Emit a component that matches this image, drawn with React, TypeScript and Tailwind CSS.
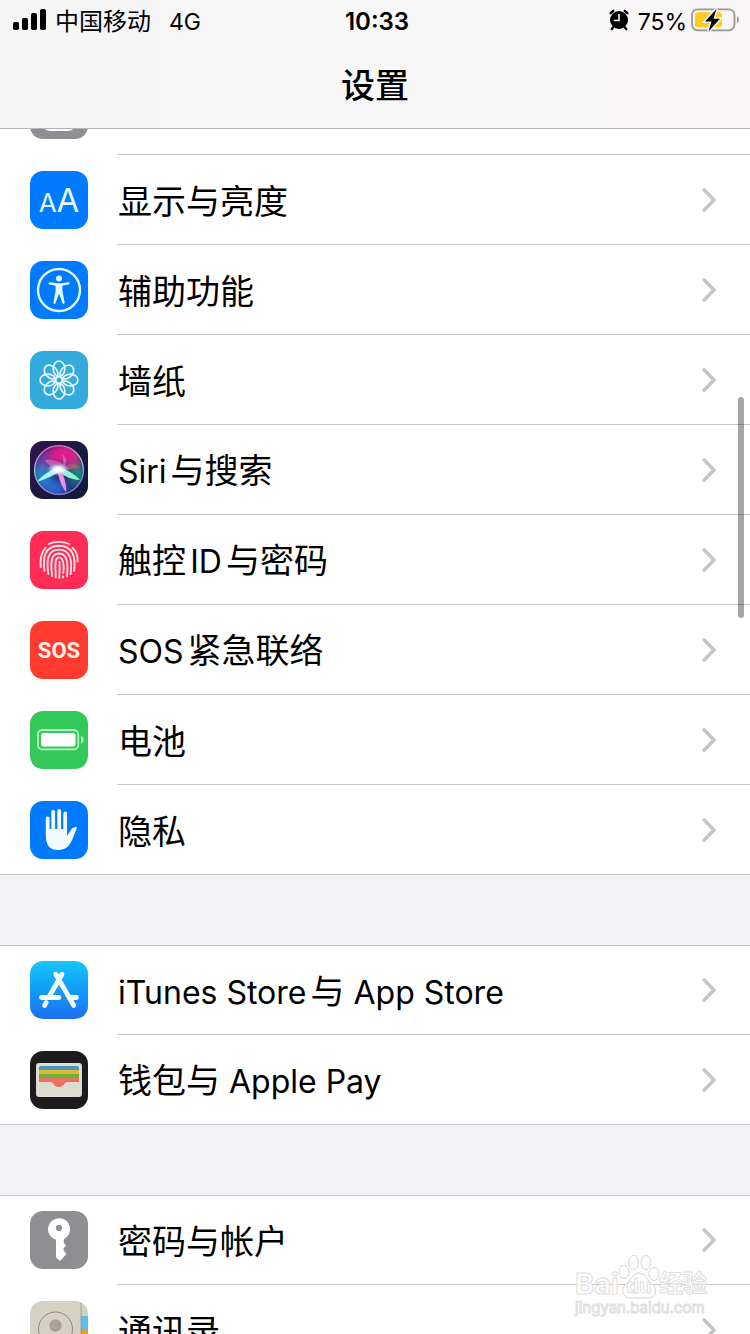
import React from "react";

interface TileProps {
  children: React.ReactNode;
  className?: string;
}

function Tile({ children, className = "" }: TileProps) {
  return (
    <svg
      viewBox="0 0 58 58"
      aria-hidden="true"
      className={`size-[58px] shrink-0 rounded-[13px] ${className}`}
    >
      {children}
    </svg>
  );
}

function ControlCenterIcon() {
  return (
    <Tile className="bg-[#8e8e93]">
      <rect x="11" y="10" width="36" height="17" rx="8.5" fill="none" stroke="#fff" strokeWidth="2.5" />
      <rect x="11" y="31" width="36" height="19" rx="9.5" fill="#fff" />
    </Tile>
  );
}

function DisplayIcon() {
  return (
    <span
      aria-hidden="true"
      className="flex size-[58px] shrink-0 items-baseline justify-center rounded-[13px] bg-[#007aff] pt-[9px] leading-10 text-[#e4f8ff]"
    >
      <span className="text-[26px]">A</span>
      <span className="text-[33px]">A</span>
    </span>
  );
}

function AccessibilityIcon() {
  return (
    <Tile className="bg-[#007aff]">
      <circle cx="29" cy="29" r="21" fill="none" stroke="#e4f8ff" strokeWidth="2.4" />
      <circle cx="29" cy="17.6" r="3" fill="#e4f8ff" />
      <path
        d="M19.5 21.3 27 22.3H31L38.5 21.3C40 21.3 40 23.4 38.7 23.6L32.4 24.8V30L34.6 41.3C34.8 43 33 43.4 32.4 42L29.4 33.5H28.6L25.6 42C25 43.4 23.2 43 23.4 41.3L25.6 30V24.8L19.3 23.6C18 23.4 18 21.3 19.5 21.3Z"
        fill="#e4f8ff"
      />
    </Tile>
  );
}

function WallpaperIcon() {
  const petals = [0, 45, 90, 135, 180, 225, 270, 315];
  return (
    <Tile className="bg-[#34aadc]">
      <g fill="none" stroke="#e6faff" strokeWidth="1.7">
        {petals.map((angle) => (
          <ellipse
            key={angle}
            transform={`rotate(${angle} 29 29)`}
            cx="29"
            cy="17.8"
            rx="5.8"
            ry="7.8"
          />
        ))}
        <circle cx="29" cy="29" r="3.4" />
      </g>
    </Tile>
  );
}

function SiriIcon() {
  return (
    <Tile>
      <defs>
        <linearGradient id="siri-bg" x1="0" y1="0" x2="1" y2="1">
          <stop offset="0" stopColor="#32144f" />
          <stop offset="1" stopColor="#0b1c35" />
        </linearGradient>
        <linearGradient id="siri-ring" x1="0" y1="0" x2="0.3" y2="1">
          <stop offset="0" stopColor="#f05bb0" />
          <stop offset="0.5" stopColor="#8ad6d4" />
          <stop offset="1" stopColor="#8d78d8" />
        </linearGradient>
        <radialGradient id="siri-glow">
          <stop offset="0" stopColor="#fff" />
          <stop offset="0.4" stopColor="#f2fdff" stopOpacity="0.9" />
          <stop offset="1" stopColor="#8fdcff" stopOpacity="0" />
        </radialGradient>
        <clipPath id="siri-orb">
          <circle cx="29" cy="29" r="24" />
        </clipPath>
        <filter id="siri-soft" x="-50%" y="-50%" width="200%" height="200%">
          <feGaussianBlur stdDeviation="4" />
        </filter>
        <filter id="siri-edge" x="-50%" y="-50%" width="200%" height="200%">
          <feGaussianBlur stdDeviation="0.6" />
        </filter>
      </defs>
      <rect width="58" height="58" fill="url(#siri-bg)" />
      <g clipPath="url(#siri-orb)">
        <rect width="58" height="58" fill="#2a2566" />
        <g filter="url(#siri-soft)">
          <ellipse cx="35" cy="13" rx="18" ry="11" fill="#e21d8c" />
          <ellipse cx="12" cy="20" rx="8" ry="10" fill="#6a36ab" />
          <ellipse cx="12" cy="35" rx="10" ry="10" fill="#1a8ccb" />
          <ellipse cx="48" cy="33" rx="8" ry="10" fill="#119080" />
          <ellipse cx="24" cy="47" rx="13" ry="8" fill="#2a68d4" />
          <ellipse cx="43" cy="45" rx="8" ry="6" fill="#1a3c76" />
        </g>
        <g filter="url(#siri-edge)">
          <path d="M28 29C21 26 16 22 15 19 22 18 29 20 33 23 34 19 33 15 31 13 38 16 38 23 31 29Z" fill="#f08acb" opacity="0.5" />
          <path d="M30 28C36 22 45 22 50 26 44 28 37 29 30 28Z" fill="#e2557f" opacity="0.5" />
          <path d="M28 26C21 29 12 34 7 41 16 38 24 34 31 30Z" fill="#b4f4ff" />
          <path d="M28 26C36 28 45 33 50 39 42 39 34 35 27 30Z" fill="#8df5d4" />
          <path d="M27 29C29 37 31 45 36 51 37 45 34 35 31 28Z" fill="#ee8fe0" />
        </g>
        <ellipse cx="28" cy="28.5" rx="12" ry="6.5" fill="url(#siri-glow)" />
      </g>
      <circle cx="29" cy="29" r="24.4" fill="none" stroke="url(#siri-ring)" strokeWidth="1.3" />
    </Tile>
  );
}

function TouchIdIcon() {
  return (
    <Tile className="bg-[#ff2d55]">
      <g fill="none" stroke="#ffdfe8" strokeWidth="1.9" strokeLinecap="round">
        <path d="M19 13C24.5 10.2 33 10.2 39 13" />
        <path d="M10.7 36C9.7 27 11.2 21.5 15.5 16.8" />
        <path d="M42.5 16.8C46.5 20.5 48 25 47.6 30.5" />
        <path d="M14.5 40C12.5 27 14.5 15 29 14.8 43.5 15 46 27 44 40" />
        <path d="M18.3 43C16.5 30 17 18.8 29 18.6 41 18.8 42.2 30 40.6 43" />
        <path d="M22 45C21 34 19.8 22.7 29 22.5 38.2 22.7 38 34 37 45.5" />
        <path d="M25.7 46.5C25.8 37 23.8 26.6 29 26.4 34.2 26.6 34 37 33.3 42" />
        <path d="M29.4 31C30 37 29.7 42 29.3 47M33 45.5V46.5" />
      </g>
    </Tile>
  );
}

function SosIcon() {
  return (
    <span
      aria-hidden="true"
      className="flex size-[58px] shrink-0 items-center justify-center rounded-[13px] bg-[#ff3b30] font-[Roboto,sans-serif] text-[22px] font-bold text-[#fff0e8]"
    >
      SOS
    </span>
  );
}

function BatteryIcon() {
  return (
    <Tile className="bg-[#34c759]">
      <rect x="7.9" y="19" width="40.4" height="19.4" rx="4.5" fill="none" stroke="#b4f2c1" strokeWidth="1.8" />
      <rect x="11" y="22" width="34.5" height="13.5" rx="2.5" fill="#fff" />
      <path d="M51 25C54.5 26 54.5 31.5 51 32.5Z" fill="#b4f2c1" />
    </Tile>
  );
}

function PrivacyIcon() {
  return (
    <Tile className="bg-[#007aff]">
      <path
        d="M17.7 34V17.5M23.2 32V11M29.2 32V10M35.2 32V12.5"
        stroke="#f2fcff"
        strokeWidth="3.8"
        strokeLinecap="round"
      />
      <path
        d="M15.9 28H37V34.5C39 33 40.8 28 43.5 26.6 45.5 25.7 47.4 26 46.8 27.4 44 33.5 42.2 40.5 38.3 45 34 49.8 23 50.6 18.8 45.4 16.2 42.2 15.9 38 15.9 34Z"
        fill="#f2fcff"
      />
    </Tile>
  );
}

function AppStoreIcon() {
  return (
    <Tile className="bg-linear-to-b from-[#1ac6fb] to-[#1d6ff2]">
      <g fill="none" stroke="#f2fcff" strokeWidth="4.8" strokeLinecap="round">
        <path d="M32 13.2 19.5 35M16.2 41.5 14.5 44.5" />
        <path d="M25.8 13.2 43.8 44.5" />
        <path d="M11.5 36.5H29M39.5 36.5H46.5" />
      </g>
    </Tile>
  );
}

function WalletIcon() {
  return (
    <Tile className="bg-[#1c1c1e]">
      <rect x="6" y="12" width="46" height="34" rx="3" fill="#dedbd0" />
      <path d="M9 19V17A2 2 0 0 1 11 15H47A2 2 0 0 1 49 17V19Z" fill="#4597bd" />
      <rect x="9" y="19" width="40" height="4" fill="#e3b52f" />
      <rect x="9" y="23" width="40" height="4" fill="#68b33b" />
      <path d="M9 27H49V31H37C34.5 31 34 36 29 36S23.5 31 21 31H9Z" fill="#ef6f61" />
    </Tile>
  );
}

function PasswordsIcon() {
  return (
    <Tile className="bg-[#8e8e93]">
      <path
        fillRule="evenodd"
        d="M29 7.2A11 11 0 0 1 33.8 28.2V32L36.2 34.5 33.5 37.2V39.5L36.5 43 30 50 26 46.5V28.8A11 11 0 0 1 29 7.2ZM29 13.8A3.1 3.1 0 1 0 29 20 3.1 3.1 0 0 0 29 13.8Z"
        fill="#fff"
      />
    </Tile>
  );
}

function ContactsIcon() {
  return (
    <Tile className="bg-[#d5d1c5]">
      <rect x="51" y="15" width="7" height="14" fill="#59bdf0" />
      <rect x="51" y="29" width="7" height="14" fill="#f79a1d" />
      <path d="M51 0V58" stroke="#96938b" strokeWidth="0.8" />
      <circle cx="25.5" cy="28" r="17" fill="none" stroke="#8d8a82" />
      <circle cx="25.5" cy="24.5" r="6.2" fill="#a6a39b" />
      <path d="M13.5 40C15 33.5 36 33.5 37.5 40 31 46.5 20 46.5 13.5 40Z" fill="#a6a39b" />
    </Tile>
  );
}

function Chevron() {
  return (
    <svg viewBox="0 0 16 26" aria-hidden="true" className="ml-auto h-[26px] w-4 shrink-0">
      <path
        d="M3 2.8 13 13 3 23.2"
        fill="none"
        stroke="#c4c4c7"
        strokeWidth="3.4"
        strokeLinecap="round"
        strokeLinejoin="miter"
      />
    </svg>
  );
}

// Western words are set a little smaller than the Chinese around them.
function Latin({ children }: { children: React.ReactNode }) {
  return <span className="text-[32px]">{children}</span>;
}

interface Item {
  id: string;
  icon: React.ReactNode;
  label: React.ReactNode;
}

const general: Item[] = [
  { id: "display", icon: <DisplayIcon />, label: "显示与亮度" },
  { id: "accessibility", icon: <AccessibilityIcon />, label: "辅助功能" },
  { id: "wallpaper", icon: <WallpaperIcon />, label: "墙纸" },
  { id: "siri", icon: <SiriIcon />, label: <><Latin>Siri</Latin>与搜索</> },
  { id: "touch-id", icon: <TouchIdIcon />, label: <>触控<Latin>ID</Latin>与密码</> },
  { id: "sos", icon: <SosIcon />, label: <><Latin>SOS</Latin>紧急联络</> },
  { id: "battery", icon: <BatteryIcon />, label: "电池" },
  { id: "privacy", icon: <PrivacyIcon />, label: "隐私" },
];

const stores: Item[] = [
  {
    id: "itunes",
    icon: <AppStoreIcon />,
    label: <><Latin>iTunes Store</Latin>与<Latin> App Store</Latin></>,
  },
  { id: "wallet", icon: <WalletIcon />, label: <>钱包与<Latin> Apple Pay</Latin></> },
];

const accounts: Item[] = [
  { id: "passwords", icon: <PasswordsIcon />, label: "密码与帐户" },
  { id: "contacts", icon: <ContactsIcon />, label: "通讯录" },
];

function Row({ item, last, short }: { item: Item; last: boolean; short: boolean }) {
  return (
    <li>
      <a href={`#${item.id}`} className={`flex pl-[30px] ${short ? "h-[89px]" : "h-[90px]"}`}>
        <span className={short ? "pt-[15px]" : "pt-4"}>{item.icon}</span>
        <span
          className={`ml-[29px] flex min-w-0 flex-1 items-center border-b pr-[33px] pl-px ${
            last ? "border-transparent" : "border-[#c6c6c8]"
          }`}
        >
          <span className="pt-1 text-[34px] leading-[48px] whitespace-nowrap [text-autospace:normal]">
            {item.label}
          </span>
          <Chevron />
        </span>
      </a>
    </li>
  );
}

function Group({ items, topBorder = true }: { items: Item[]; topBorder?: boolean }) {
  return (
    <ul className={`bg-white shadow-[inset_0_-1px_0_#c6c6c8] ${topBorder ? "border-t border-[#c6c6c8]" : ""}`}>
      {items.map((item, index) => (
        <Row
          key={item.id}
          item={item}
          last={index === items.length - 1}
          short={topBorder && index === 0}
        />
      ))}
    </ul>
  );
}

function StatusBar() {
  return (
    <div className="grid h-10 grid-cols-[1fr_auto_1fr] items-center pr-[9px] pl-[13px] text-[24px] leading-8">
      <div className="flex items-center">
        <svg viewBox="0 0 34 22" aria-hidden="true" className="mr-2 h-[22px] w-[34px]">
          <rect x="0" y="13" width="6" height="8" rx="1.8" />
          <rect x="9" y="9" width="6" height="12" rx="1.8" />
          <rect x="18" y="4" width="6" height="17" rx="1.8" />
          <rect x="27" y="0" width="6" height="21" rx="1.8" />
        </svg>
        <span className="pt-1">中国移动</span>
        <span className="ml-[18px] pt-1 text-[23px]">4G</span>
      </div>
      <time className="pt-1 text-[24px] font-semibold">10:33</time>
      <div className="flex items-center justify-end">
        <svg viewBox="0 0 22 24" aria-hidden="true" className="mr-2 h-6 w-[22px]">
          <path d="M2.6 5.2 5.2 2.8M19.4 5.2 16.8 2.8M5 19.5 3.8 21M17 19.5 18.2 21" stroke="#000" strokeWidth="2.4" strokeLinecap="round" />
          <circle cx="11" cy="12" r="9" />
          <path d="M11 6.5V12.5H6.5" fill="none" stroke="#f7f5f5" strokeWidth="1.6" strokeLinecap="round" />
        </svg>
        <span className="pt-1 text-[23px]">75%</span>
        <svg viewBox="0 0 50 26" aria-hidden="true" className="ml-1 h-[26px] w-[50px]">
          <rect x="1" y="2.3" width="42.5" height="21" rx="5.5" fill="none" stroke="#999896" strokeWidth="1.8" />
          <rect x="4" y="5.3" width="27" height="15" rx="3" fill="#ffcc1a" />
          <path d="M46 9.5C48.6 10.5 48.6 15 46 16Z" fill="#999896" />
          <path d="M25.5 2 14 14.6H20.5L17.5 24.5 29 11.8H22.5Z" stroke="#f7f5f5" strokeWidth="3" />
          <path d="M25.5 2 14 14.6H20.5L17.5 24.5 29 11.8H22.5Z" />
        </svg>
      </div>
    </div>
  );
}

function Watermark() {
  return (
    <div
      aria-hidden="true"
      className="pointer-events-none absolute right-10 bottom-[17px] w-[135px] text-white/90 [-webkit-text-stroke:1px_#dededf]"
    >
      <div className="flex items-end">
        <span className="text-[29px] leading-[30px] font-bold">Bai</span>
        <span className="relative h-[46px] w-10 shrink-0">
          <svg viewBox="0 0 40 46" className="h-[46px] w-10 overflow-visible" fill="#fff" stroke="#d3d3d5">
            <ellipse cx="5" cy="19" rx="5" ry="6.5" />
            <ellipse cx="14.5" cy="9.5" rx="5" ry="7" />
            <ellipse cx="27" cy="9.5" rx="5" ry="7" />
            <ellipse cx="35" cy="21" rx="5" ry="6.5" />
            <path d="M20 20C14 20 11 28 6 32 1 37 4 45 12 45 17 45 24 45 29 45 37 45 39 37 34 32 29 28 26 20 20 20Z" />
          </svg>
          <span className="absolute inset-x-0 bottom-0 text-center text-[20px] leading-[26px] font-bold">du</span>
        </span>
        <span className="text-[24px] leading-[30px] font-bold whitespace-nowrap">经验</span>
      </div>
      <div className="text-[15px] leading-[18px]">jingyan.baidu.com</div>
    </div>
  );
}

export default function App() {
  return (
    <div className="relative h-screen overflow-hidden bg-[#f2f2f7] font-[Inter,'Noto_Sans_CJK_SC',sans-serif] text-black">
      <header className="h-[129px] border-b border-[#b5b5b8] bg-linear-to-r from-[#f5f5f6] via-[#f7f7f7] to-[#f7f5f5]">
        <StatusBar />
        <h1 className="pt-[22px] text-center text-[34px] leading-[48px] font-medium">设置</h1>
      </header>

      <main>
        {/* tail of the row that is scrolled under the header */}
        <div className="flex h-[26px] items-end overflow-hidden bg-white">
          <div className="flex h-[90px] w-full shrink-0 pl-[30px]">
            <span className="pt-4">
              <ControlCenterIcon />
            </span>
            <span className="ml-[29px] flex-1 border-b border-[#c6c6c8]" />
          </div>
        </div>
        <Group items={general} topBorder={false} />
        <div className="mt-[70px]">
          <Group items={stores} />
        </div>
        <div className="mt-[70px]">
          <Group items={accounts} />
        </div>
      </main>

      <div className="absolute top-[397px] right-[6px] h-[221px] w-[6px] rounded-full bg-black/35" />
      <Watermark />
    </div>
  );
}
